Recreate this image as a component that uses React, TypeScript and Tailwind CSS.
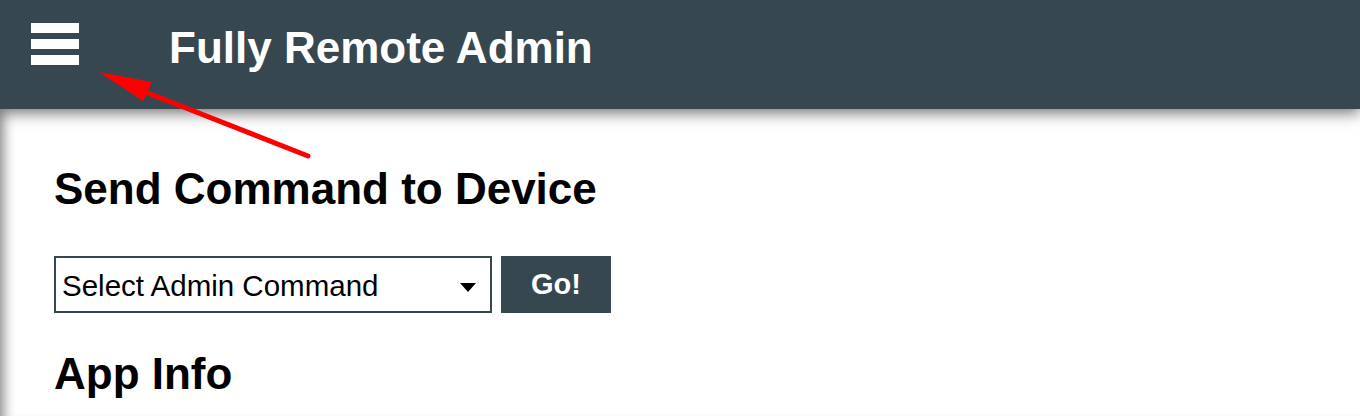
import { useState } from 'react'

const COMMANDS = [
  'Select Admin Command',
  'Restart App',
  'Load Start URL',
  'Screen On',
  'Screen Off',
]

export default function App() {
  const [cmd, setCmd] = useState(COMMANDS[0])

  return (
    <div className="relative w-[1360px] h-[416px] overflow-hidden bg-white font-['Liberation_Sans',Arial,sans-serif] text-black">
      <header className="relative z-10 flex h-[109px] items-start bg-[#37474f] shadow-[0_4px_14px_rgba(0,0,0,0.55)]">
        <button type="button" aria-label="Menu" className="ml-[31px] mt-[23px] flex w-[48px] flex-col gap-[6px]">
          <span className="block h-[10px] w-full bg-white" />
          <span className="block h-[10px] w-full bg-white" />
          <span className="block h-[10px] w-full bg-white" />
        </button>
        <h1 className="ml-[90px] mt-[26px] text-[44px] leading-[44px] font-bold text-white">Fully Remote Admin</h1>
      </header>

      <main className="h-[307px] shadow-[inset_14px_0_12px_-10px_rgba(0,0,0,0.45)] pl-[54px] pt-[58px]">
        <h2 className="text-[44px] font-bold leading-[44px]">Send Command to Device</h2>

        <div className="mt-[45px] flex gap-[9px]">
          <div className="relative h-[57px] w-[438px] border-2 border-[#37474f]">
            <select
              value={cmd}
              onChange={e => setCmd(e.target.value)}
              className="h-full w-full appearance-none bg-white pl-[6px] pt-[3px] text-[29.5px] outline-none font-['Liberation_Sans',Arial,sans-serif]"
            >
              {COMMANDS.map(c => <option key={c}>{c}</option>)}
            </select>
            <svg className="pointer-events-none absolute right-[14px] top-[25px]" width="16" height="9" viewBox="0 0 16 9">
              <path d="M0 0 H16 L8 9 Z" fill="#000" />
            </svg>
          </div>
          <button type="button" className="h-[57px] w-[110px] bg-[#37474f] text-[29px] font-bold text-white">Go!</button>
        </div>

        <h2 className="mt-[39px] text-[44px] font-bold leading-[44px]">App Info</h2>
      </main>

      {/* annotation arrow */}
      <svg className="pointer-events-none absolute left-0 top-0 z-20" width="340" height="170" viewBox="0 0 340 170">
        <line x1="308" y1="156" x2="135" y2="88" stroke="#ff0000" strokeWidth="5" strokeLinecap="round" />
        <path d="M99 72 L152 82 L143 101 Z" fill="#ff0000" />
      </svg>
    </div>
  )
}
